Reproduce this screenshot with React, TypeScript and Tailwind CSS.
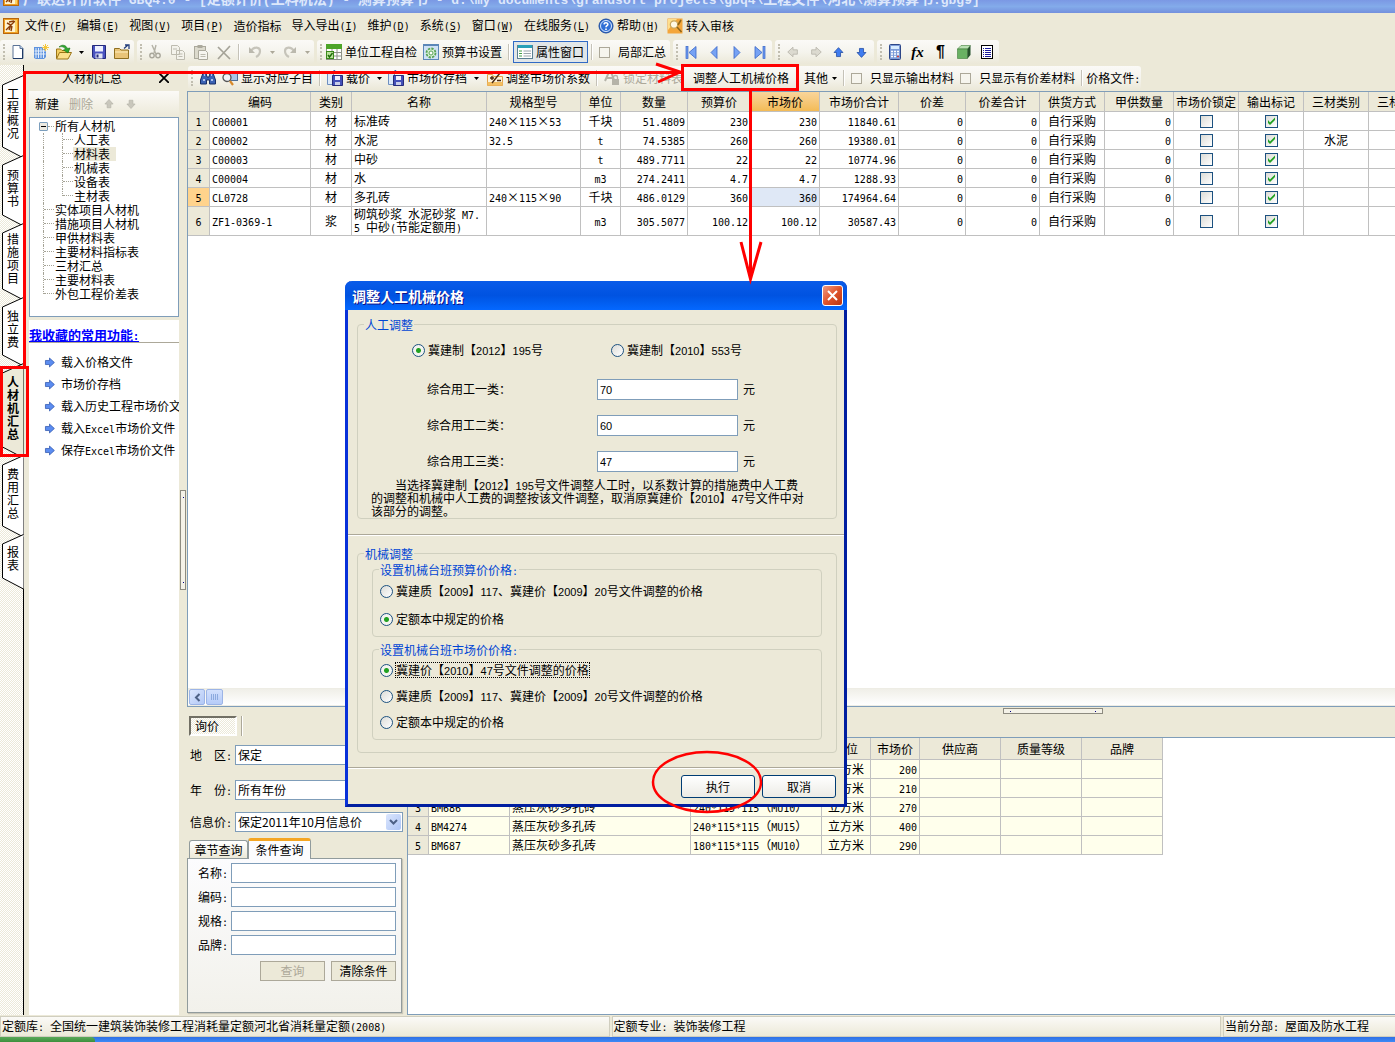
import React, { useState } from "react";
import clsx from "clsx";

const halfWidth = "font-['DejaVu_Sans_Mono',monospace] text-[10px]";
const dialogLatin = "font-['Liberation_Sans',sans-serif] text-[11px]";
const titleLatin = "font-['Liberation_Mono',monospace] text-[13px]";

// Latin runs sit in a half-width face so that two letters fill one CJK cell
const T = ({ children, latin = halfWidth }: { children: string; latin?: string }) => (
  <>
    {children.split(/([\x20-\x7e]+)/).map((part, i) =>
      i % 2 ? (
        <span key={i} className={clsx(latin, "leading-none whitespace-pre")}>
          {part}
        </span>
      ) : (
        part
      )
    )}
  </>
);

const Svg = ({ children, size = 16 }: { children: React.ReactNode; size?: number }) => (
  <svg width={size} height={size} viewBox="0 0 16 16" className="shrink-0" aria-hidden="true">
    {children}
  </svg>
);

const AppIcon = () => (
  <Svg>
    <rect x="0.5" y="0.5" width="15" height="15" fill="#f0a020" stroke="#b8660c" />
    <rect x="2" y="2" width="10" height="12" fill="#fff3cf" />
    <path d="M3 12 12 3M4 5l4 2-2 5M6 4l5-1M9 8l-1 5" stroke="#8a3c06" strokeWidth="1.4" fill="none" />
    <path d="M13 2v12" stroke="#ffe27a" strokeWidth="1.5" />
  </Svg>
);
const HelpIcon = () => (
  <Svg>
    <circle cx="8" cy="8" r="7" fill="#2f6fd6" stroke="#1c4a9c" />
    <circle cx="8" cy="8" r="5.5" fill="none" stroke="#dbe8fb" />
    <path d="M6 6.3C6.2 4.2 10 4.3 9.8 6.5 9.7 7.7 8 7.8 8 9.3M8 10.5v1.6" stroke="#fff" strokeWidth="1.6" fill="none" />
  </Svg>
);
const AuditIcon = () => (
  <Svg>
    <rect x="0.5" y="0.5" width="15" height="15" fill="#f4a63a" />
    <path d="M1 1h9L1 12z" fill="#ffdf8c" />
    <circle cx="7" cy="6.5" r="3.7" fill="#fff8e4" stroke="#c9a45a" strokeWidth="1.2" />
    <path d="m10 9 4.5 5M14 2l-3 5" stroke="#8f6418" strokeWidth="1.6" />
  </Svg>
);
const NewIcon = () => (
  <Svg>
    <path d="M3 1.5h7l3 3v10H3z" fill="#fff" stroke="#5b7396" />
    <path d="M10 1.5v3h3" fill="#bcd0ee" stroke="#5b7396" />
    <path d="M12.5 5v9.5H3" stroke="#1f3a66" fill="none" />
  </Svg>
);
const ProjectIcon = () => (
  <Svg>
    <path d="M1 3h12v10l-2 2H3l-2-1z" fill="#5f93de" />
    <path d="M3 4v10M5.5 4v10M8 4v10M10.5 4v10M1.5 7h11M1.5 10h11" stroke="#e3eefc" />
    <path d="M12.5 0v7M9 3.5h7M10 1l5 5M15 1l-5 5" stroke="#f5c73c" />
  </Svg>
);
const OpenIcon = () => (
  <Svg>
    <path d="M.5 14V5h4L6 6.500h6V9" fill="#f3cf62" stroke="#9a7416" />
    <path d="M.5 15 3.500 8.500h12L12 15z" fill="#fbe08a" stroke="#9a7416" />
    <path d="M3 3c3-3 7-2 8.500 1.500L14 4l-2 5-4.500-3 2-.7C8.500 3 6 2 3 3z" fill="#2faa2f" stroke="#147014" strokeWidth="0.6" />
  </Svg>
);
const SaveIcon = () => (
  <Svg>
    <path d="M1.500 1.500h13v13H3l-1.500-1.500z" fill="#4a53c0" stroke="#23297c" />
    <rect x="4" y="2" width="8" height="5.500" fill="#eef1ff" />
    <rect x="4.500" y="9.500" width="7" height="5" fill="#dfe3f2" />
    <rect x="5.500" y="10.500" width="2" height="3" fill="#23297c" />
  </Svg>
);
const ExportIcon = () => (
  <Svg>
    <path d="M.5 14.500V4.500h5L7 6h7.500v8.500z" fill="#e9c478" stroke="#8f6f20" />
    <path d="M1 8h13" stroke="#fff0c0" />
    <path d="M10 4.500 14 1M11 1h4v4" stroke="#223e7c" strokeWidth="1.300" fill="none" />
  </Svg>
);
const CutIcon = () => (
  <Svg>
    <path d="M5 1l4 9M9 1 7 9" stroke="#b4b2a6" strokeWidth="1.400" />
    <circle cx="5" cy="11.500" r="2.200" fill="none" stroke="#a9a79b" strokeWidth="1.400" />
    <circle cx="11" cy="11.500" r="2.200" fill="none" stroke="#a9a79b" strokeWidth="1.400" />
  </Svg>
);
const CopyIcon = () => (
  <Svg>
    <path d="M1.500 1.500h6l2 2v7h-8zM6.500 6.500h6l2 2v7h-8z" fill="#f4f3ec" stroke="#bdbbaf" />
    <path d="M8.500 10h4M8.500 12.500h4M3 5h4" stroke="#bdbbaf" />
  </Svg>
);
const PasteIcon = () => (
  <Svg>
    <rect x="1.500" y="2.500" width="11" height="12" fill="#dcdacd" stroke="#aba99c" />
    <rect x="4.500" y="1" width="5" height="3" fill="#aba99c" />
    <path d="M5.500 6.500h7l2 2v7h-9z" fill="#f6f5ef" stroke="#aba99c" />
    <path d="M7.500 10.500h5M7.500 12.500h5" stroke="#bdbbaf" />
  </Svg>
);
const DeleteIcon = () => (
  <Svg>
    <path d="M2 3l12 12M14 2 2 15" stroke="#a5a398" strokeWidth="1.700" />
  </Svg>
);
const UndoIcon = ({ flip = false }) => (
  <Svg>
    <g transform={flip ? "matrix(-1 0 0 1 16 0)" : undefined}>
      <path d="M4 7c3-5 9-4 9 0 0 3-2 5-4 6" fill="none" stroke="#c6c4ba" strokeWidth="2.200" />
      <path d="M2 3v6h6z" fill="#bbb9ae" />
    </g>
  </Svg>
);
const CheckTableIcon = () => (
  <Svg>
    <rect x="0.500" y="0.500" width="15" height="15" fill="#fff" stroke="#8e9288" />
    <rect x="0" y="0" width="16" height="5" fill="#4da52a" />
    <path d="M1 8.500h14M1 12h14M6 5v10M11 5v10" stroke="#8e9288" />
    <rect x="0.500" y="7.500" width="7" height="7" fill="#b9e29a" stroke="#3b8a1c" />
    <path d="m2 11 1.500 2L6.500 9" stroke="#1d6b0a" strokeWidth="1.400" fill="none" />
  </Svg>
);
const GearIcon = () => (
  <Svg>
    <rect x="0.500" y="0.500" width="15" height="15" fill="#cfe1f5" stroke="#5c87b8" />
    <rect x="0" y="0" width="16" height="2" fill="#5c87b8" />
    <circle cx="8" cy="9" r="4.500" fill="#d9f0d4" stroke="#58a355" strokeWidth="1.800" strokeDasharray="2.300 1.200" />
    <circle cx="8" cy="9" r="2" fill="#fff" stroke="#58a355" />
  </Svg>
);
const PropIcon = () => (
  <Svg>
    <rect x="0.500" y="1.500" width="15" height="13" fill="#fff" stroke="#5a7f92" />
    <rect x="1" y="1" width="14" height="3" fill="#28a0b8" />
    <path d="M2 7h3M2 9.500h3M2 12h3" stroke="#43a047" />
    <path d="M6.500 7H14M6.500 9.500H14M6.500 12H14" stroke="#9aa5ac" />
  </Svg>
);
const NavIcon = ({ dir, bar = false }: { dir: "left" | "right"; bar?: boolean }) => (
  <Svg>
    <g transform={dir === "right" ? "matrix(-1 0 0 1 16 0)" : undefined}>
      {bar && <rect x="3" y="2.500" width="2" height="12" fill="#6f9cf0" stroke="#3766c8" strokeWidth="0.700" />}
      <path d={bar ? "M13 2.500v12L6 8.500z" : "M11 2.500v12l-6-6z"} fill="#76a2f4" stroke="#3766c8" strokeWidth="0.800" />
    </g>
  </Svg>
);
const turns = { right: 0, down: 90, left: 180, up: 270 };
const ArrowIcon = ({ dir, color, edge, size = 16 }: { dir: keyof typeof turns; color: string; edge: string; size?: number }) => (
  <Svg size={size}>
    <path
      d="M3 5.500h5V2.500L14 8l-6 5.500v-3H3z"
      fill={color}
      stroke={edge}
      strokeWidth="0.900"
      transform={`rotate(${turns[dir]} 8 8)`}
    />
  </Svg>
);
const CalcIcon = () => (
  <Svg>
    <rect x="2.500" y="0.500" width="11" height="15" rx="1" fill="#7d9cd8" stroke="#2d4688" />
    <rect x="4" y="2" width="8" height="3" fill="#d8ecff" />
    <path d="M4 7.500h8M4 10h8M4 12.500h8" stroke="#fff" strokeWidth="1.500" strokeDasharray="2 1" />
    <path d="M10 12.500h2" stroke="#d04040" strokeWidth="1.500" />
  </Svg>
);
const CubeIcon = () => (
  <Svg>
    <path d="M1.500 5 5 1.500h9.500L11.500 5z" fill="#b9e0b2" stroke="#3f7d3a" strokeWidth="0.600" />
    <path d="M1.500 5h10v9.500h-10z" fill="#69b163" stroke="#3f7d3a" strokeWidth="0.600" />
    <path d="m11.500 5 3-3.500v9.500l-3 3.500z" fill="#24512a" />
  </Svg>
);
const ListIcon = () => (
  <Svg>
    <rect x="2.500" y="1.500" width="11" height="13" fill="#fff" stroke="#000" />
    <path d="M4 4.500h1M4 6.500h1M4 8.500h1M4 10.500h1M4 12.500h1M6 4.500h6M6 6.500h6M6 8.500h6M6 10.500h6M6 12.500h6" stroke="#1c1c9c" />
  </Svg>
);
const FindIcon = () => (
  <Svg>
    <path d="M3 3h3l1 4h2l1-4h3l2.500 7v4h-6v-4h-3v4h-6v-4z" fill="#3b62b4" stroke="#182f66" />
    <path d="M3 10h2M11 10h2M4 5h1M11 5h1" stroke="#d5e4ff" strokeWidth="1.500" />
  </Svg>
);
const LookupIcon = () => (
  <Svg>
    <rect x="4.500" y="2.500" width="11" height="8" fill="#a9c6e8" stroke="#4f6f96" />
    <circle cx="5" cy="7.500" r="4" fill="#f0f4f8" stroke="#555" strokeWidth="1.300" />
    <path d="m8 11 3 4" stroke="#d88a2a" strokeWidth="2.200" />
  </Svg>
);
const DiskIcon = () => (
  <Svg>
    <path d="M.5 2.500h6v12h-6z" fill="#dce9fa" stroke="#6d8fc0" />
    <path d="M5.500 5.500h10v10h-10z" fill="#4450b8" stroke="#262b7a" />
    <rect x="8" y="6" width="5" height="4" fill="#eef" />
    <rect x="8" y="12" width="5" height="3" fill="#c8cdea" />
    <path d="M2 2.500h5V0l4 3.500" fill="none" stroke="#2d5fc0" />
  </Svg>
);
const FactorIcon = () => (
  <Svg>
    <path d="M.5 4.500h5l1 2h9v9H.5z" fill="#fdf3da" stroke="#e2a24a" />
    <path d="M.5 12h15v3.500H.5z" fill="#f3bf62" />
    <path d="M5 13 13 3M5 6v4M3 8h4M10 10.500h4" stroke="#4a2b12" strokeWidth="1.400" />
  </Svg>
);
const LockIcon = () => (
  <Svg>
    <path d="M1 11 5 2h2l3 8M3 8h6" stroke="#b5b3a8" strokeWidth="2" fill="none" />
    <rect x="8" y="9" width="7" height="6" fill="#b5b3a8" />
    <path d="M9.500 9V7c0-2 4-2 4 0v2" fill="none" stroke="#b5b3a8" strokeWidth="1.300" />
  </Svg>
);

const Band = ({ children, className }: { children: React.ReactNode; className?: string }) => (
  <div
    className={clsx(
      "flex h-6 shrink-0 items-center rounded-[3px] bg-linear-to-b from-[#fbfaf7] via-[#f5f4ed] to-[#ebe8d8] pr-px",
      className
    )}
  >
    <span className="ml-[3px] mr-px h-4 w-0.5 shrink-0 border-l-2 border-dotted border-[#c1beb0]" />
    {children}
  </div>
);
const IconButton = ({ label, children }: { label: string; children: React.ReactNode }) => (
  <button aria-label={label} className="flex h-[22px] w-[23px] shrink-0 items-center justify-center">
    {children}
  </button>
);
const TextButton = ({ icon, children, className }: { icon?: React.ReactNode; children: string; className?: string }) => (
  <button className={clsx("flex h-[22px] shrink-0 items-center gap-[3px] px-[3px]", className)}>
    {icon}
    {children}
  </button>
);
const Drop = ({ gray = false }) => (
  <button aria-label="更多" className="flex h-[22px] w-3 shrink-0 items-center justify-center">
    <svg width="5" height="3" viewBox="0 0 5 3">
      <path d="M0 0h5L2.500 3z" fill={gray ? "#aca899" : "#000"} />
    </svg>
  </button>
);
const Sep = () => <span className="mx-[3px] h-4 w-0.5 shrink-0 border-l border-r border-l-[#c5c2b8] border-r-white" />;
const ToolCheck = ({ children }: { children: string }) => (
  <label className="flex shrink-0 items-center gap-2 px-[3px]">
    <input type="checkbox" className="h-[11px] w-[11px] appearance-none border border-[#aca899] bg-[#f6f5ee]" />
    {children}
  </label>
);

const menus = [
  ["文件", "F"],
  ["编辑", "E"],
  ["视图", "V"],
  ["项目", "P"],
  ["造价指标", ""],
  ["导入导出", "I"],
  ["维护", "D"],
  ["系统", "S"],
  ["窗口", "W"],
  ["在线服务", "L"],
];

const MenuText = ({ name, hot }: { name: string; hot: string }) => (
  <>
    {name}
    {hot && (
      <span className={halfWidth}>
        (<u>{hot}</u>)
      </span>
    )}
  </>
);

const sideTabs = [
  { name: "工程概况", height: 84 },
  { name: "预算书", height: 72 },
  { name: "措施项目", height: 78 },
  { name: "独立费", height: 70 },
  { name: "人材机汇总", height: 96 },
  { name: "费用汇总", height: 83 },
  { name: "报表", height: 56 },
];

const SideTab = ({ name, height, active, onClick }: { name: string; height: number; active: boolean; onClick: () => void }) => (
  <button
    onClick={onClick}
    style={{ height }}
    className={clsx("relative -mb-1 flex w-6 shrink-0 items-center justify-center pb-2 pl-0.5", active && "font-bold")}
  >
    <svg width="24" height={height} className="absolute inset-0" aria-hidden="true">
      <path
        d={`M23.500 .5 2.500 10V${height - 12}L23.500 ${height - 1}`}
        fill={active ? "#ece9d8" : "#fff"}
        stroke="#000"
      />
    </svg>
    <span className="relative w-3 text-[12px] leading-[13px]">
      {name.split("").map((c) => (
        <span key={c} className="block">
          {c}
        </span>
      ))}
    </span>
  </button>
);

const tables = ["人工表", "材料表", "机械表", "设备表", "主材表"];
const summaries = ["实体项目人材机", "措施项目人材机", "甲供材料表", "主要材料指标表", "三材汇总", "主要材料表", "外包工程价差表"];

const Branch = ({ last }: { last: boolean }) => (
  <span className={clsx("w-[11px] shrink-0 self-start border-l border-dotted border-[#a5a396]", last ? "h-[7px]" : "h-full")}>
    <span className="block h-[7px] border-b border-dotted border-[#a5a396]" />
  </span>
);

const Tree = () => (
  <ul className="h-[200px] border border-[#7f9db9] bg-white pt-px leading-[14px]">
    <li className="flex h-[14px] items-center pl-[9px]">
      <button aria-label="收起" className="flex h-[9px] w-[9px] items-center justify-center rounded-[1px] border border-[#7b9ebd] bg-[#ece9e0]">
        <span className="h-px w-[5px] bg-black" />
      </button>
      <span className="mr-px w-[6px] border-b border-dotted border-[#a5a396]" />
      所有人材机
    </li>
    {tables.map((name, i) => (
      <li key={name} className="flex h-[14px] items-center pl-[13px]">
        <span className="h-full w-[19px] border-l border-dotted border-[#a5a396]" />
        <Branch last={i === tables.length - 1} />
        <span className={clsx("px-px", name === "材料表" && "bg-[#ece9d8] pr-1.5")}>{name}</span>
      </li>
    ))}
    {summaries.map((name, i) => (
      <li key={name} className="flex h-[14px] items-center pl-[13px]">
        <Branch last={i === summaries.length - 1} />
        <span className="pl-px">{name}</span>
      </li>
    ))}
  </ul>
);

const favorites = ["载入价格文件", "市场价存档", "载入历史工程市场价文件", "载入Excel市场价文件", "保存Excel市场价文件"];

const gridCols = [
  { name: "", width: "w-[22px]" },
  { name: "编码", width: "w-[101px]" },
  { name: "类别", width: "w-[41px]" },
  { name: "名称", width: "w-[135px]" },
  { name: "规格型号", width: "w-[94px]" },
  { name: "单位", width: "w-[40px]" },
  { name: "数量", width: "w-[67px]" },
  { name: "预算价", width: "w-[63px]" },
  { name: "市场价", width: "w-[69px]" },
  { name: "市场价合计", width: "w-[79px]" },
  { name: "价差", width: "w-[67px]" },
  { name: "价差合计", width: "w-[74px]" },
  { name: "供货方式", width: "w-[65px]" },
  { name: "甲供数量", width: "w-[69px]" },
  { name: "市场价锁定", width: "w-[65px]" },
  { name: "输出标记", width: "w-[65px]" },
  { name: "三材类别", width: "w-[65px]" },
  { name: "三材系数", width: "w-[65px]" },
];

const materials = [
  { code: "C00001", kind: "材", name: "标准砖", spec: "240×115×53", unit: "千块", qty: "51.4809", budget: "230", market: "230", total: "11840.61", major: "" },
  { code: "C00002", kind: "材", name: "水泥", spec: "32.5", unit: "t", qty: "74.5385", budget: "260", market: "260", total: "19380.01", major: "水泥" },
  { code: "C00003", kind: "材", name: "中砂", spec: "", unit: "t", qty: "489.7711", budget: "22", market: "22", total: "10774.96", major: "" },
  { code: "C00004", kind: "材", name: "水", spec: "", unit: "m3", qty: "274.2411", budget: "4.7", market: "4.7", total: "1288.93", major: "" },
  { code: "CL0728", kind: "材", name: "多孔砖", spec: "240×115×90", unit: "千块", qty: "486.0129", budget: "360", market: "360", total: "174964.64", major: "" },
  { code: "ZF1-0369-1", kind: "浆", name: "砌筑砂浆 水泥砂浆 M7.|5 中砂(节能定额用)", spec: "", unit: "m3", qty: "305.5077", budget: "100.12", market: "100.12", total: "30587.43", major: "" },
];

const cell = "border-r border-b border-[#c0c0c0] p-0 overflow-hidden";
const left = clsx(cell, "pl-0.5 text-left");
const mid = clsx(cell, "text-center");
const right = clsx(cell, "pr-0.5 text-right");
const head = clsx(cell, "bg-[#ece9d8] text-center font-normal whitespace-nowrap");

const CellCheck = ({ label, checked = false }: { label: string; checked?: boolean }) => (
  <span className="relative mx-auto block h-[13px] w-[13px]">
    <input
      type="checkbox"
      aria-label={label}
      defaultChecked={checked}
      className="peer block h-[13px] w-[13px] appearance-none border border-[#1c5180] bg-linear-to-br from-[#dcdcd7] to-white"
    />
    <svg viewBox="0 0 13 13" className="pointer-events-none absolute inset-0 hidden peer-checked:block">
      <path d="M3 5v3l2 2 5-5V2.500L5 7.500z" fill="#21a121" />
    </svg>
  </span>
);

const MaterialGrid = () => (
  <table className="w-[1246px] table-fixed border-separate border-spacing-0 leading-3">
    <thead>
      <tr className="h-5">
        {gridCols.map((c) => (
          <th
            key={c.name}
            className={clsx(c.width, head, c.name === "市场价" && "bg-linear-to-b from-[#f9d59a] to-[#f3bb55]")}
          >
            {c.name}
          </th>
        ))}
      </tr>
    </thead>
    <tbody>
      {materials.map((m, i) => (
        <tr key={m.code} className={i === 5 ? "h-[29px]" : "h-[19px]"}>
          <td className={clsx(mid, i === 4 ? "bg-[#ffd38c]" : "bg-[#ece9d8]")}><T>{String(i + 1)}</T></td>
          <td className={left}><T>{m.code}</T></td>
          <td className={mid}>{m.kind}</td>
          <td className={left}>
            {m.name.split("|").map((line) => (
              <span key={line} className="block whitespace-nowrap"><T>{line}</T></span>
            ))}
          </td>
          <td className={left}><T>{m.spec}</T></td>
          <td className={mid}><T>{m.unit}</T></td>
          <td className={right}><T>{m.qty}</T></td>
          <td className={right}><T>{m.budget}</T></td>
          <td className={clsx(right, i === 4 && "bg-[#dfe8f6]")}><T>{m.market}</T></td>
          <td className={right}><T>{m.total}</T></td>
          <td className={right}><T>0</T></td>
          <td className={right}><T>0</T></td>
          <td className={mid}>自行采购</td>
          <td className={right}><T>0</T></td>
          <td className={mid}><CellCheck label="市场价锁定" /></td>
          <td className={mid}><CellCheck label="输出标记" checked /></td>
          <td className={mid}>{m.major}</td>
          <td className={mid}></td>
        </tr>
      ))}
    </tbody>
  </table>
);

const priceCols = [
  { name: "", width: "w-[21px]" },
  { name: "编码", width: "w-[81px]" },
  { name: "名称", width: "w-[181px]" },
  { name: "规格型号", width: "w-[131px]" },
  { name: "单位", width: "w-[49px]" },
  { name: "市场价", width: "w-[49px]" },
  { name: "供应商", width: "w-[81px]" },
  { name: "质量等级", width: "w-[81px]" },
  { name: "品牌", width: "w-[81px]" },
];

const prices = [
  ["BM682", "240*115*90（MU10）", "200"],
  ["BM684", "240*115*90（MU15）", "210"],
  ["BM686", "240*115*115（MU10）", "270"],
  ["BM4274", "240*115*115（MU15）", "400"],
  ["BM687", "180*115*115（MU10）", "290"],
];

const PriceGrid = () => (
  <table className="w-[755px] table-fixed border-separate border-spacing-0 leading-3">
    <thead>
      <tr className="h-[22px]">
        {priceCols.map((c) => (
          <th key={c.name} className={clsx(c.width, head)}>{c.name}</th>
        ))}
      </tr>
    </thead>
    <tbody className="bg-[#ffffec]">
      {prices.map(([code, spec, price], i) => (
        <tr key={code} className="h-[19px]">
          <td className={clsx(mid, "bg-[#ece9d8]")}><T>{String(i + 1)}</T></td>
          <td className={left}><T>{code}</T></td>
          <td className={left}>蒸压灰砂多孔砖</td>
          <td className={clsx(left, "whitespace-nowrap")}><T>{spec}</T></td>
          <td className={mid}>立方米</td>
          <td className={right}><T>{price}</T></td>
          <td className={cell}></td>
          <td className={cell}></td>
          <td className={cell}></td>
        </tr>
      ))}
    </tbody>
  </table>
);

const SelectRow = ({ label, id, value, className }: { label: string; id: string; value: string; className: string }) => (
  <div className={clsx("flex h-5 items-center", className)}>
    <label htmlFor={id} className="w-[45px] shrink-0 text-right whitespace-pre"><T>{label}</T></label>
    <div className="relative ml-[3px] w-[168px]">
      <select id={id} className="block h-5 w-full appearance-none border border-[#7f9db9] bg-white pl-0.5 leading-[18px] outline-none">
        <option>{value}</option>
      </select>
      <span className="pointer-events-none absolute top-0.5 right-0.5 flex h-4 w-[15px] items-center justify-center rounded-[2px] bg-linear-to-br from-[#dbe6fd] to-[#aec5f5]">
        <svg width="9" height="6" viewBox="0 0 9 6">
          <path d="m1 1 3.500 3.500L8 1" fill="none" stroke="#4d6185" strokeWidth="2" />
        </svg>
      </span>
    </div>
  </div>
);

const InquiryForm = () => (
  <section className="flex w-[220px] shrink-0 flex-col pt-[9px]">
    <div className="flex items-center gap-1 pl-0.5">
      <button className="h-5 w-12 border-2 border-t-[#716f64] border-l-[#716f64] border-r-white border-b-white bg-[#f6f5ee] bg-[repeating-conic-gradient(#fff_0_25%,#ece9d8_0_50%)] bg-[length:2px_2px] pr-3 leading-4">
        询价
      </button>
      <span className="h-5 w-0.5 border-l border-r border-l-[#aca899] border-r-white" />
    </div>
    <SelectRow id="region" label="地　区:" value="保定" className="mt-[9px]" />
    <SelectRow id="year" label="年　份:" value="所有年份" className="mt-[15px]" />
    <SelectRow id="info" label="信息价:" value="保定2011年10月信息价" className="mt-3" />
    <div className="mt-1.5 flex items-end pl-0.5">
      <button className="h-[18px] w-[59px] rounded-t-[3px] border border-b-0 border-[#919b9c] bg-linear-to-b from-white to-[#ece9d8]">
        章节查询
      </button>
      <button className="relative -mb-px h-[21px] w-[63px] rounded-t-[3px] border border-t-3 border-b-0 border-[#919b9c] border-t-[#f5a623] bg-[#fcfcfe]">
        条件查询
      </button>
    </div>
    <div className="mr-[5px] mb-0.5 flex flex-1 flex-col gap-1 border border-[#919b9c] bg-linear-to-b from-[#fcfcfe] to-[#f2f1eb] pt-1 shadow-[1px_1px_1px_#c9c6b8]">
      {["名称", "编码", "规格", "品牌"].map((name) => (
        <label key={name} className="flex h-5 items-center gap-0.5 pr-[5px] pl-2.5">
          <span className="w-[31px] shrink-0 whitespace-nowrap"><T>{name + ":"}</T></span>
          <input type="text" className="h-5 min-w-0 flex-1 border border-[#7f9db9] bg-white px-1 outline-none" />
        </label>
      ))}
      <div className="mt-0.5 flex justify-end gap-1.5 pr-[5px]">
        <button disabled className="h-5 w-[65px] border border-[#aca899] bg-[#ece9d8] text-[#aca899]">查询</button>
        <button className="h-5 w-[65px] border border-[#aca899] bg-[#ece9d8]">清除条件</button>
      </div>
    </div>
  </section>
);

const Radio = ({ name, children, checked = false, focused = false }: { name: string; children: string; checked?: boolean; focused?: boolean }) => (
  <label className="flex h-3.5 items-center gap-[3px] leading-3.5 whitespace-nowrap">
    <input
      type="radio"
      name={name}
      defaultChecked={checked}
      className="h-[13px] w-[13px] shrink-0 appearance-none rounded-full border border-[#1d5281] bg-linear-to-br from-[#dcdcd7] to-white checked:bg-[radial-gradient(circle,#21a121_0_2px,#f4f4f0_3px)]"
    />
    <span className={clsx(focused && "outline-1 outline-dotted outline-black")}>
      <T latin={dialogLatin}>{children}</T>
    </span>
  </label>
);

const wages = [
  ["综合用工一类：", "70"],
  ["综合用工二类：", "60"],
  ["综合用工三类：", "47"],
];

const group = "rounded-[4px] border border-[#d0d0bf]";
const legend = "h-[13px] px-px leading-[13px] text-[#0046d5]";

const PriceDialog = ({ onClose }: { onClose: () => void }) => (
  <div
    role="dialog"
    aria-label="调整人工机械价格"
    className="absolute top-[281px] left-[345px] w-[502px] rounded-t-[7px] border-3 border-t-0 border-[#0831d9] border-r-[#001ea0] border-b-[#001ea0] bg-[#ece9d8]"
  >
    <div className="-mx-[3px] flex h-[29px] items-center justify-between rounded-t-[7px] bg-linear-to-b from-[#0a5be8] via-[#0053e1] to-[#0468ff] pr-1 pl-[7px]">
      <h2 className="text-[14px] font-bold text-white [text-shadow:1px_1px_#0f1089]">调整人工机械价格</h2>
      <button
        aria-label="关闭"
        onClick={onClose}
        className="flex h-[21px] w-[21px] items-center justify-center rounded-[3px] border border-white bg-linear-to-br from-[#ee9a80] via-[#e0532a] to-[#b93512]"
      >
        <svg width="13" height="13" viewBox="0 0 13 13">
          <path d="m2 2 9 9M11 2l-9 9" stroke="#fff" strokeWidth="2" />
        </svg>
      </button>
    </div>
    <div className="pt-2 pr-[7px] pl-[9px]">
      <fieldset className={clsx(group, "pb-px")}>
        <legend className={clsx(legend, "ml-1.5")}>人工调整</legend>
        <div className="mt-3 flex pl-[54px]">
          <div className="w-[199px]">
            <Radio name="labor" checked>冀建制【2012】195号</Radio>
          </div>
          <Radio name="labor">冀建制【2010】553号</Radio>
        </div>
        <div className="mt-[22px] flex flex-col gap-[15px] pl-[69px]">
          {wages.map(([name, value]) => (
            <div key={name} className="flex h-[21px] items-center">
              <label htmlFor={name} className="w-[170px] pb-0.5">{name}</label>
              <input
                id={name}
                defaultValue={value}
                className="h-[21px] w-[141px] border border-[#7f9db9] bg-white px-0.5 font-['Liberation_Sans',sans-serif] text-[11px] outline-none"
              />
              <span className="ml-[5px] pb-0.5">元</span>
            </div>
          ))}
        </div>
        <p className="mt-1.5 pl-[13px] leading-[13px] whitespace-nowrap">
          <span className="block h-[13px] pl-6"><T latin={dialogLatin}>当选择冀建制【2012】195号文件调整人工时，以系数计算的措施费中人工费</T></span>
          <span className="block h-[13px]"><T latin={dialogLatin}>的调整和机械中人工费的调整按该文件调整，取消原冀建价【2010】47号文件中对</T></span>
          <span className="block h-[13px]">该部分的调整。</span>
        </p>
      </fieldset>
    </div>
    <hr className="mt-[15px] h-0.5 border-t border-b border-t-[#aca899] border-b-white" />
    <div className="pt-[11px] pr-[7px] pl-[9px]">
      <fieldset className={clsx(group, "px-3.5 pb-3")}>
        <legend className={clsx(legend, "-ml-2")}>机械调整</legend>
        <fieldset className={clsx(group, "mt-[3px] pb-2.5 pl-[7px]")}>
          <legend className={clsx(legend, "-ml-px")}><T>设置机械台班预算价价格:</T></legend>
          <div className="flex flex-col gap-3.5 pt-2">
            <Radio name="budget">冀建质【2009】117、冀建价【2009】20号文件调整的价格</Radio>
            <Radio name="budget" checked>定额本中规定的价格</Radio>
          </div>
        </fieldset>
        <fieldset className={clsx(group, "mt-1.5 pb-2.5 pl-[7px]")}>
          <legend className={clsx(legend, "-ml-px")}><T>设置机械台班市场价价格:</T></legend>
          <div className="flex flex-col gap-3 pt-[7px]">
            <Radio name="market" checked focused>冀建价【2010】47号文件调整的价格</Radio>
            <Radio name="market">冀建质【2009】117、冀建价【2009】20号文件调整的价格</Radio>
            <Radio name="market">定额本中规定的价格</Radio>
          </div>
        </fieldset>
      </fieldset>
    </div>
    <hr className="mt-3.5 h-0.5 border-t border-b border-t-[#aca899] border-b-white" />
    <div className="flex justify-end gap-[7px] pt-1.5 pr-2 pb-1.5">
      {["执行", "取消"].map((name) => (
        <button
          key={name}
          onClick={onClose}
          className="h-[23px] w-[74px] rounded-[3px] border border-[#003c74] bg-linear-to-b from-white to-[#ecebe5]"
        >
          {name}
        </button>
      ))}
    </div>
  </div>
);

// Red guide marks showing the order of the steps
const Marks = () => (
  <svg className="pointer-events-none absolute top-0 left-0" width="850" height="820" fill="none" stroke="#f00" strokeWidth="3" aria-hidden="true">
    <path d="M24.500 366V72.500H682M656 64l24 8-22 10" />
    <rect x="1.500" y="367.500" width="26" height="88" />
    <rect x="682.500" y="65.500" width="115" height="24" />
    <path d="M750.500 90v188M741 242l9.500 37L761 242" />
    <ellipse cx="707" cy="782" rx="54" ry="30" strokeWidth="2.500" />
  </svg>
);

const App = () => {
  const [tab, setTab] = useState("人材机汇总");
  const [open, setOpen] = useState(true);

  return (
    <div className="relative flex h-screen min-h-[900px] w-full flex-col overflow-hidden bg-[#ece9d8] font-['Noto_Sans_CJK_SC',sans-serif] text-[12px] leading-4 text-black">
      {/* Title bar */}
      <header className="flex h-[13px] shrink-0 items-end overflow-hidden bg-linear-to-b from-[#7b98e4] via-[#83abea] to-[#7490dd]">
        <div className="flex h-[30px] items-center gap-1 pl-[3px] whitespace-pre">
          <AppIcon />
          <h1 className="text-[14px] font-bold text-[#dde8fb]">
            <T latin={titleLatin}>
              {"广联达计价软件 GBQ4.0 - [定额计价(工料机法) - 测算预算书 - d:\\my documents\\grandsoft projects\\gbq4\\工程文件\\河北\\测算预算书.gbg9]"}
            </T>
          </h1>
        </div>
      </header>

      {/* Menu */}
      <nav className="flex h-[26px] shrink-0 items-center gap-2.5 pl-[3px] whitespace-nowrap">
        <div className="flex items-center gap-1.5">
          <AppIcon />
          <button><MenuText name="文件" hot="F" /></button>
        </div>
        {menus.slice(1).map(([name, hot]) => (
          <button key={name}><MenuText name={name} hot={hot} /></button>
        ))}
        <button className="-ml-0.5 flex items-center gap-[3px]">
          <HelpIcon />
          <span><MenuText name="帮助" hot="H" /></span>
        </button>
        <button className="-ml-0.5 flex items-center gap-[3px]">
          <AuditIcon />
          转入审核
        </button>
      </nav>

      {/* Main toolbar */}
      <div className="flex h-[26px] shrink-0 items-center gap-[3px] whitespace-nowrap">
        <Band>
          <IconButton label="新建"><NewIcon /></IconButton>
          <IconButton label="新建项目"><ProjectIcon /></IconButton>
          <IconButton label="打开"><OpenIcon /></IconButton>
          <Drop />
          <IconButton label="保存"><SaveIcon /></IconButton>
          <IconButton label="导出"><ExportIcon /></IconButton>
        </Band>
        <Band>
          <IconButton label="剪切"><CutIcon /></IconButton>
          <IconButton label="复制"><CopyIcon /></IconButton>
          <IconButton label="粘贴"><PasteIcon /></IconButton>
          <IconButton label="删除"><DeleteIcon /></IconButton>
          <Sep />
          <IconButton label="撤销"><UndoIcon /></IconButton>
          <Drop gray />
          <IconButton label="恢复"><UndoIcon flip /></IconButton>
          <Drop gray />
        </Band>
        <Band>
          <TextButton icon={<CheckTableIcon />}>单位工程自检</TextButton>
          <TextButton icon={<GearIcon />}>预算书设置</TextButton>
          <Sep />
          <TextButton icon={<PropIcon />} className="border border-[#316ac5] bg-[#e1e6e8]">属性窗口</TextButton>
          <Sep />
          <ToolCheck>局部汇总</ToolCheck>
        </Band>
        <Band>
          <IconButton label="首条"><NavIcon dir="left" bar /></IconButton>
          <IconButton label="上一条"><NavIcon dir="left" /></IconButton>
          <IconButton label="下一条"><NavIcon dir="right" /></IconButton>
          <IconButton label="末条"><NavIcon dir="right" bar /></IconButton>
        </Band>
        <Band>
          <IconButton label="左移"><ArrowIcon dir="left" color="#dcdad0" edge="#b5b3a8" size={14} /></IconButton>
          <IconButton label="右移"><ArrowIcon dir="right" color="#dcdad0" edge="#b5b3a8" size={14} /></IconButton>
          <IconButton label="上移"><ArrowIcon dir="up" color="#3f7cf0" edge="#1c449c" size={13} /></IconButton>
          <IconButton label="下移"><ArrowIcon dir="down" color="#3f7cf0" edge="#1c449c" size={13} /></IconButton>
        </Band>
        <Band>
          <IconButton label="计算器"><CalcIcon /></IconButton>
          <IconButton label="函数">
            <span className="font-['Liberation_Serif',serif] text-[15px] font-bold italic">fx</span>
          </IconButton>
          <IconButton label="段落">
            <span className="font-['Liberation_Sans',sans-serif] text-[16px] font-bold">¶</span>
          </IconButton>
          <IconButton label="图元"><CubeIcon /></IconButton>
          <IconButton label="列表"><ListIcon /></IconButton>
        </Band>
      </div>

      <div className="flex min-h-0 flex-1">
        {/* Vertical page tabs */}
        <div className="flex w-6 shrink-0 flex-col border-r border-black bg-[repeating-conic-gradient(#fff_0_25%,#ece9d8_0_50%)] bg-[length:2px_2px] pt-2.5">
          {sideTabs.map((t) => (
            <SideTab key={t.name} {...t} active={t.name === tab} onClick={() => setTab(t.name)} />
          ))}
        </div>

        {/* Summary panel */}
        <aside className="flex w-[155px] shrink-0 flex-col pl-[5px]">
          <div className="flex h-[26px] items-center justify-between pr-2.5 pl-[33px]">
            人材机汇总
            <button aria-label="关闭">
              <svg width="10" height="10" viewBox="0 0 10 10">
                <path d="m0 0 10 10M10 0 0 10" stroke="#000" strokeWidth="1.800" />
              </svg>
            </button>
          </div>
          <div className="flex h-[26px] items-center gap-2.5 bg-linear-to-b from-[#fbfaf7] to-[#ece9d8] pl-1.5">
            <button>新建</button>
            <button disabled className="text-[#aca899]">删除</button>
            <button aria-label="上移"><ArrowIcon dir="up" color="#c9c7bc" edge="#b5b3a8" size={12} /></button>
            <button aria-label="下移"><ArrowIcon dir="down" color="#c9c7bc" edge="#b5b3a8" size={12} /></button>
          </div>
          <Tree />
          <div className="mt-[3px] flex-1 overflow-hidden bg-white pt-2">
            <h3 className="border-b border-[#aca899] text-[13px] leading-[14px] font-bold whitespace-nowrap text-[#0000ff] underline">
              <T>我收藏的常用功能:</T>
            </h3>
            <ul className="pt-2">
              {favorites.map((name) => (
                <li key={name} className="h-[22px] overflow-hidden pl-3.5">
                  <a href="#" className="flex h-full items-center gap-[5px] whitespace-nowrap">
                    <ArrowIcon dir="right" color="#5b8cf0" edge="#2c54ac" size={13} />
                    <span><T>{name}</T></span>
                  </a>
                </li>
              ))}
            </ul>
          </div>
        </aside>
        <div className="flex w-2 shrink-0 items-center justify-center">
          <div className="flex h-[100px] w-1.5 flex-col items-center justify-between border border-[#8d8b80] bg-[#f4f2e8] py-1.5">
            <span className="h-px w-px bg-[#000080]" />
            <span className="h-px w-px bg-[#000080]" />
          </div>
        </div>

        <main className="flex min-w-0 flex-1 flex-col">
          <div className="flex h-[26px] shrink-0 items-center overflow-hidden whitespace-nowrap">
            <Band className="ml-px pr-2.5">
              <span className="w-0.5" />
              <IconButton label="查找"><FindIcon /></IconButton>
              <TextButton icon={<LookupIcon />}>显示对应子目</TextButton>
              <Sep />
              <TextButton icon={<DiskIcon />}>载价</TextButton>
              <Drop />
              <TextButton icon={<DiskIcon />}>市场价存档</TextButton>
              <Drop />
              <span className="w-0.5" />
              <TextButton icon={<FactorIcon />}>调整市场价系数</TextButton>
              <Sep />
              <TextButton icon={<LockIcon />} className="text-[#aca899]">锁定材料表</TextButton>
              <button className="px-[7px]" onClick={() => setOpen(true)}>调整人工机械价格</button>
              <button className="pl-2">其他</button>
              <Drop />
              <Sep />
              <ToolCheck>只显示输出材料</ToolCheck>
              <ToolCheck>只显示有价差材料</ToolCheck>
              <Sep />
              <span><T>价格文件:</T></span>
            </Band>
          </div>

          <section className="flex min-h-0 flex-1 flex-col overflow-hidden border-y border-l border-[#7f9db9] bg-white">
            <div className="min-h-0 flex-1 overflow-hidden">
              <MaterialGrid />
            </div>
            <div className="flex h-[18px] shrink-0 items-center gap-px border-y border-[#eeede5] bg-linear-to-b from-[#f0efe8] to-white pl-px">
              <button aria-label="向左" className="flex h-4 w-4 items-center justify-center rounded-[2px] border border-[#9cb4e6] bg-linear-to-br from-[#dbe6fd] to-[#b2c8f6]">
                <svg width="7" height="9" viewBox="0 0 7 9">
                  <path d="M5.500 1 2 4.500 5.500 8" fill="none" stroke="#4d6185" strokeWidth="2" />
                </svg>
              </button>
              <span className="flex h-4 w-[17px] items-center justify-center gap-px rounded-[2px] border border-[#9cb4e6] bg-linear-to-b from-[#d2e0fd] to-[#b6cbf8]">
                {[1, 2, 3, 4].map((i) => (
                  <span key={i} className="h-1.5 w-px bg-[#8caade]" />
                ))}
              </span>
            </div>
          </section>

          <div className="flex h-[308px] shrink-0">
            <InquiryForm />
            <div className="flex min-w-0 flex-1 flex-col">
              <div className="flex h-[30px] shrink-0 items-start justify-center pt-px pl-[304px]">
                <div className="flex h-1.5 w-[100px] items-center justify-between border border-[#8d8b80] bg-[#f4f2e8] px-1.5">
                  <span className="h-px w-px bg-[#000080]" />
                  <span className="h-px w-px bg-[#000080]" />
                </div>
              </div>
              <section className="min-h-0 flex-1 overflow-hidden border-y border-l border-[#7f9db9] bg-white">
                <PriceGrid />
              </section>
            </div>
          </div>
        </main>
      </div>

      {/* Status bar */}
      <footer className="flex h-[22px] shrink-0 gap-0.5 bg-[#ece9d8] pt-px whitespace-nowrap">
        {["定额库: 全国统一建筑装饰装修工程消耗量定额河北省消耗量定额(2008)", "定额专业: 装饰装修工程"].map((text) => (
          <div key={text} className="min-w-0 flex-1 overflow-hidden border border-[#d0cebf] bg-linear-to-b from-[#fbfaf7] to-[#ece9d8] px-px leading-[18px]">
            <T>{text}</T>
          </div>
        ))}
        <div className="w-[172px] shrink-0 border border-r-0 border-[#d0cebf] bg-linear-to-b from-[#fbfaf7] to-[#ece9d8] px-px leading-[18px]">
          <T>当前分部: 屋面及防水工程</T>
        </div>
      </footer>
      <div className="flex h-[5px] shrink-0 bg-linear-to-b from-[#2f6fe4] to-[#3d8af5]">
        <span className="w-[95px] rounded-tr-[4px] bg-linear-to-b from-[#5aa85a] to-[#3c8f3c]" />
      </div>

      {open && <PriceDialog onClose={() => setOpen(false)} />}
      <Marks />
    </div>
  );
};

export default App;
